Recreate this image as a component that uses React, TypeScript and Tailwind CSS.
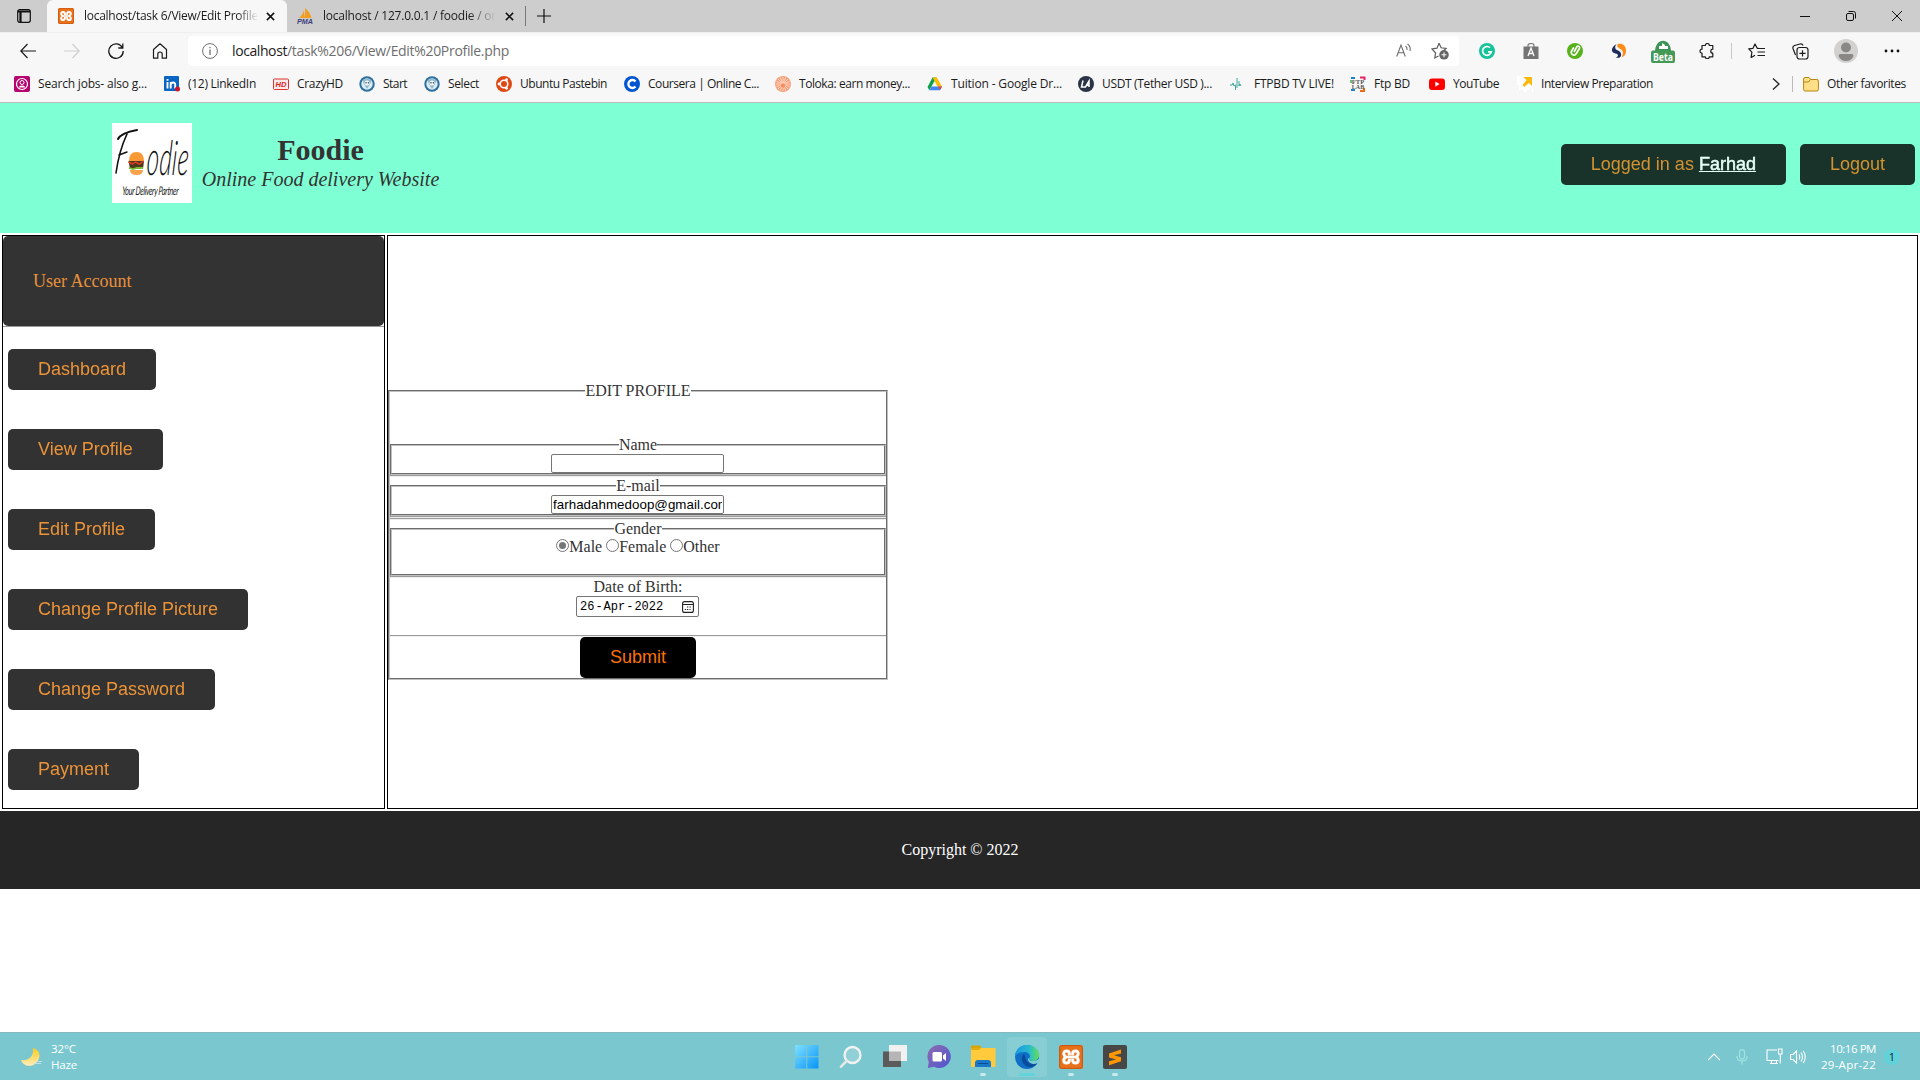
import React, { useLayoutEffect, useRef, useState } from "react";

type FitProps = { text: string; width: number; className?: string };

/* Single-line label whose tracking is adjusted to fill a given width. */
function Fit({ text, width, className = "" }: FitProps) {
  const ref = useRef<HTMLSpanElement>(null);
  const [spacing, setSpacing] = useState(0);
  useLayoutEffect(() => {
    if (ref.current) {
      const natural = ref.current.getBoundingClientRect().width;
      setSpacing((width - natural) / text.length);
    }
  }, []);
  return (
    <span className={"block shrink-0 overflow-visible whitespace-pre " + className} style={{ width }}>
      <span ref={ref} style={{ letterSpacing: spacing }}>{text}</span>
    </span>
  );
}

const UI = "font-['Open_Sans','Noto_Sans',sans-serif]";

function XamppMark() {
  return (
    <>
      <rect width="24" height="24" rx="2.500" fill="#e8711c" />
      <rect x=".7" y=".7" width="22.600" height="22.600" rx="2" fill="none" stroke="#c9560c" />
      <g fill="none" stroke="#fff" strokeWidth="3" strokeLinejoin="round">
        <path d="M10.300 10.500V8.500Q10.300 6 7.500 6T4.800 8.800Q4.800 10.500 6.800 12Q4.800 13.500 4.800 15.200Q4.800 18 7.500 18T10.300 15.500V13.500" />
        <path d="M13.700 10.500V8.500Q13.700 6 16.500 6T19.200 8.800Q19.200 10.500 17.200 12Q19.200 13.500 19.200 15.200Q19.200 18 16.500 18T13.700 15.500V13.500" />
        <path d="M7 12h10" strokeWidth="2.400" />
      </g>
    </>
  );
}

function Close() {
  return (
    <svg viewBox="0 0 10 10" className="h-[9px] w-[9px] shrink-0">
      <path d="M1 1l8 8M9 1l-8 8" stroke="#111" strokeWidth="1.700" />
    </svg>
  );
}

function TabBar() {
  return (
    <div className="flex h-8 items-stretch bg-[#cdcdcd] text-xs text-[#1b1b1b]">
      <div className="flex w-[47px] items-center pl-[17px]">
        <svg viewBox="0 0 14 14" className="h-[14px] w-[14px]">
          <rect x=".7" y=".7" width="12.600" height="12.600" rx="2" fill="none" stroke="#111" strokeWidth="1.200" />
          <path d="M1 2.500h12M3.500 3v10" stroke="#111" strokeWidth="2.200" />
        </svg>
      </div>
      <div className="flex w-[240px] items-center rounded-t-md bg-[#f7f7f7] pl-[11px]">
        <svg viewBox="0 0 24 24" className="h-4 w-4 shrink-0"><XamppMark /></svg>
        <div className="ml-[10px] w-[174px] overflow-hidden [mask-image:linear-gradient(to_right,black_88%,transparent)]">
          <Fit text="localhost/task 6/View/Edit Profile" width={174} />
        </div>
        <div className="ml-[8px]"><Close /></div>
      </div>
      <div className="flex w-[238px] items-center pl-[10px]">
        <svg viewBox="0 0 16 16" className="h-4 w-4 shrink-0">
          <path d="M2 10Q6.500 6.500 6.500 2L8 10zM8 10V0Q13 4 14.500 10z" fill="#f29d1f" />
          <text x="0" y="15.800" fontSize="6.500" fontWeight="700" fontStyle="italic" fontFamily="Liberation Sans" fill="#3c3f7c" textLength="16" lengthAdjust="spacingAndGlyphs">PMA</text>
        </svg>
        <div className="ml-[10px] w-[173px] overflow-hidden [mask-image:linear-gradient(to_right,black_84%,transparent)]">
          <Fit text="localhost / 127.0.0.1 / foodie / or" width={173} />
        </div>
        <div className="ml-[9px]"><Close /></div>
      </div>
      <div className="my-[6px] w-px bg-[#777]" />
      <svg viewBox="0 0 14 14" className="ml-[11px] mt-[9px] h-[14px] w-[14px]">
        <path d="M7 0v14M0 7h14" stroke="#111" strokeWidth="1.200" />
      </svg>
      <div className="ml-auto flex items-center pr-[18px]">
        <svg viewBox="0 0 10 10" className="h-[10px] w-[10px]"><path d="M0 5.500h10" stroke="#111" /></svg>
        <svg viewBox="0 0 10 10" className="ml-[36px] h-[10px] w-[10px]">
          <rect x=".5" y="2.500" width="7" height="7" rx="1.500" fill="none" stroke="#111" />
          <path d="M2.500 .5H7.500a2 2 0 0 1 2 2v5" fill="none" stroke="#111" />
        </svg>
        <svg viewBox="0 0 10 10" className="ml-[36px] h-[10px] w-[10px]"><path d="M0 0l10 10M10 0L0 10" stroke="#111" /></svg>
      </div>
    </div>
  );
}

function ToolBar() {
  return (
    <div className="flex h-[37px] items-center border-t border-[#efefef] bg-[#f7f7f7]">
      <svg viewBox="0 0 16 16" className="ml-5 h-4 w-4 shrink-0" fill="none" stroke="#1b1b1b" strokeWidth="1.200"><path d="M16 8H.8M7.500 1L.8 8l6.700 7" /></svg>
      <svg viewBox="0 0 16 16" className="ml-7 h-4 w-4 shrink-0" fill="none" stroke="#cfcfcf" strokeWidth="1.200"><path d="M0 8h15.200M8.500 1l6.700 7-6.700 7" /></svg>
      <svg viewBox="0 0 16 16" className="ml-7 h-4 w-4 shrink-0" fill="none" stroke="#1b1b1b" strokeWidth="1.300"><path d="M14.500 5A7.200 7.200 0 1 0 15.200 8M14.800 .5V5h-4.500" /></svg>
      <svg viewBox="0 0 16 16" className="ml-7 h-4 w-4 shrink-0" fill="none" stroke="#1b1b1b" strokeWidth="1.200" strokeLinejoin="round"><path d="M1.500 6.500L8 .8l6.500 5.700v8.700h-4.300v-4a2.200 2.200 0 0 0-4.400 0v4H1.500z" /></svg>
      <div className="ml-5 flex h-[30px] w-[1271px] items-center rounded bg-white pl-[14px]">
        <svg viewBox="0 0 16 16" className="h-4 w-4" fill="none" stroke="#6e6e6e"><circle cx="8" cy="8" r="7.400" /><path d="M8 6.500v5.500M8 4v1.300" strokeWidth="1.300" /></svg>
        <div className="ml-[14px] flex text-sm leading-5">
          <Fit text="localhost" width={55} className="text-[#1b1b1b]" />
          <Fit text="/task%206/View/Edit%20Profile.php" width={222} className="text-[#6e6e6e]" />
        </div>
        <svg viewBox="0 0 16 16" className="ml-auto h-4 w-4" fill="none" stroke="#6e6e6e" strokeWidth="1.100"><path d="M.7 13.500L5 2l4.300 11.500M2.200 9.700h5.600M9.500 3q2 1.500 1.500 4M11.500 1q3.500 2.500 2.500 7" /></svg>
        <svg viewBox="0 0 18 18" className="ml-[19px] mr-[10px] h-[18px] w-[18px]">
          <path d="M8 1.300l2.100 4.500 5 .7-3.600 3.300M7.500 14l-3.700 2 .8-5L1 7l5-.8L8 1.300" fill="none" stroke="#5e5e5e" strokeWidth="1.200" />
          <circle cx="13" cy="12.800" r="4.800" fill="#666" /><path d="M13 10.300v5M10.500 12.800h5" stroke="#fff" />
        </svg>
      </div>
      <svg viewBox="0 0 16 16" className="ml-[20px] h-4 w-4 shrink-0"><circle cx="8" cy="8" r="8" fill="#15c39a" /><path d="M11 4.700A4.400 4.400 0 1 0 12.300 8.800H9" fill="none" stroke="#fff" strokeWidth="1.700" /></svg>
      <svg viewBox="0 0 16 16" className="ml-7 h-4 w-4 shrink-0"><path d="M5 4V2.500a3 2 0 0 1 6 0V4" fill="none" stroke="#777" strokeWidth="1.200" /><path d="M.5 3.500h15V16H.5z" fill="#747474" /><path d="M5 13l3-8 3 8M6 10.500h4" fill="none" stroke="#fff" strokeWidth="1.300" /></svg>
      <svg viewBox="0 0 16 16" className="ml-7 h-4 w-4 shrink-0"><circle cx="8" cy="8" r="8" fill="#55b21a" /><path d="M6.500 5L4.700 7.800a2.700 2.700 0 0 0 4.500 3l3.200-5.300a1.500 1.500 0 0 0-2.600-1.600L7.300 8.500" fill="none" stroke="#fff" strokeWidth="1.700" strokeLinecap="round" /></svg>
      <svg viewBox="0 0 16 16" className="ml-7 h-4 w-4 shrink-0"><path d="M5.500 1C-1 5 0 10 4.500 10.500 8.500 11 7 14 4.500 14.500 11 16.500 12 9.500 7 7.500 3.500 6.500 3.500 3.500 5.500 1z" fill="#1c2c5b" /><path d="M6.500 1.200c5-1.500 9 2 8.500 7s-3 5.500-4.500 6c2.500-4 1.500-7-1.500-8.500S6 3.200 6.500 1.200z" fill="#ff8b1a" /></svg>
      <svg viewBox="0 0 24 24" className="ml-6 h-6 w-6 shrink-0">
        <path d="M4 13C4-2 20-2 20 13z" fill="#3d9456" /><path d="M8 10V7h3V4l3 2v1h3v3z" fill="#fff" />
        <rect y="11.500" width="24" height="12.500" rx="2" fill="#459957" />
        <text x="12" y="21.500" fontSize="10.500" fontWeight="700" fill="#fff" textAnchor="middle" textLength="20" lengthAdjust="spacingAndGlyphs" fontFamily="Open Sans">Beta</text>
      </svg>
      <svg viewBox="0 0 16 16" className="ml-[24px] h-4 w-4 shrink-0" fill="none" stroke="#1b1b1b" strokeWidth="1.200" strokeLinejoin="round"><path d="M3 2.500h3.300a2 2 0 0 1 4 0h3.500v3.700a2 2 0 0 0 0 4v3.600h-3.500a2 2 0 0 1-4 0H3v-3.600a2 2 0 1 1 0-4z" /></svg>
      <div className="ml-[16px] h-4 w-px shrink-0 bg-[#c8c8c8]" />
      <svg viewBox="0 0 17 16" className="ml-[16px] h-4 w-[17px] shrink-0" fill="none" stroke="#1b1b1b" strokeWidth="1.200" strokeLinejoin="round"><path d="M10.500 5.300H9.200L7 1 5 5.300l-4.300.6 3.200 3.300-.8 5.300L7 12.200M10.500 5.500H17M9.500 9H17M9.500 12.500H17" /></svg>
      <svg viewBox="0 0 17 17" className="ml-[27px] h-[17px] w-[17px] shrink-0" fill="none" stroke="#1b1b1b" strokeWidth="1.200"><path d="M3.500 12L1 5.500a2.500 2.500 0 0 1 1.500-3L8 1q2.300-.5 3 1.500" /><rect x="5" y="4.500" width="11" height="11.500" rx="2.500" /><path d="M10.500 7.200v6.200M7.400 10.300h6.200" /></svg>
      <svg viewBox="0 0 24 24" className="ml-[25px] h-6 w-6 shrink-0"><circle cx="12" cy="12" r="12" fill="#d3d1cf" /><circle cx="12" cy="8.500" r="5" fill="#8a8886" /><path d="M4.500 17q0-2 2-2h11q2 0 2 2-2 5-7.500 5t-7.500-5z" fill="#8a8886" /></svg>
      <svg viewBox="0 0 16 16" className="ml-[26px] h-4 w-4 shrink-0" fill="#111"><circle cx="2" cy="8" r="1.400" /><circle cx="8" cy="8" r="1.400" /><circle cx="14" cy="8" r="1.400" /></svg>
    </div>
  );
}

function Swirl() {
  return (
    <>
      <circle cx="8" cy="8" r="7.700" fill="#2d6f9f" />
      <circle cx="8" cy="8" r="5.700" fill="#dcecf3" />
      <path d="M3.500 4.500Q8 1 12.500 4.500L11 8l-3 5-3-5z" fill="#8fb8cd" />
      <circle cx="8" cy="7" r="2.500" fill="#f4f8fa" /><path d="M7 6v1.500M9.300 6v1.500" stroke="#234" />
    </>
  );
}

const bookmarks: { text: string; width: number; gap: string; icon: React.ReactNode }[] = [
  { text: "Search jobs- also g...", width: 109, gap: "mr-[17px]", icon: <><rect width="16" height="16" rx="2" fill="#b5046f" /><circle cx="8" cy="8" r="5.500" fill="none" stroke="#fff" strokeWidth="1.200" /><circle cx="8" cy="6.500" r="2" fill="none" stroke="#fff" /><path d="M5 11.500q0-2 3-2t3 2z" fill="#fff" /></> },
  { text: "(12) LinkedIn", width: 68, gap: "mr-[17px]", icon: <><rect width="15" height="15" rx="1" fill="#0a66c2" /><path d="M3.500 6v6.500M3.500 3v1.800M6.700 6v6.500M6.700 9q0-2.500 2.300-2.500T11.200 9v3.500" fill="none" stroke="#fff" strokeWidth="1.900" /><circle cx="13.500" cy="13" r="2.500" fill="#d11124" /></> },
  { text: "CrazyHD", width: 46, gap: "mr-[16px]", icon: <><rect x=".5" y="3" width="15" height="10.500" rx="1" fill="#fbe9e9" stroke="#d33" /><text x="8" y="11" fontSize="7.500" fontWeight="700" fontStyle="italic" fill="#d22" textAnchor="middle" fontFamily="Liberation Sans">HD</text></> },
  { text: "Start", width: 24, gap: "mr-[17px]", icon: <Swirl /> },
  { text: "Select", width: 31, gap: "mr-[17px]", icon: <Swirl /> },
  { text: "Ubuntu Pastebin", width: 87, gap: "mr-[17px]", icon: <><circle cx="8" cy="8" r="8" fill="#dd4814" /><circle cx="8" cy="8" r="3.800" fill="none" stroke="#fff" strokeWidth="1.600" /><circle cx="3" cy="8" r="1.400" fill="#fff" /><circle cx="10.500" cy="3.700" r="1.400" fill="#fff" /><circle cx="10.500" cy="12.300" r="1.400" fill="#fff" /></> },
  { text: "Coursera | Online C...", width: 111, gap: "mr-[16px]", icon: <><circle cx="8" cy="8" r="8" fill="#0056d2" /><path d="M11.500 5.500A4 4 0 1 0 11.500 10.500" fill="none" stroke="#fff" strokeWidth="2.300" /></> },
  { text: "Toloka: earn money...", width: 111, gap: "mr-[17px]", icon: <><circle cx="8" cy="8" r="8" fill="#f8a27c" /><path d="M8 1v14M1 8h14M3 3l10 10M13 3L3 13M5.300 1.500l5.400 13M10.700 1.500l-5.400 13M1.500 5.300l13 5.400M1.500 10.700l13-5.400" stroke="#fde3d6" strokeWidth=".7" /><circle cx="8" cy="9.500" r="2.200" fill="#fb8a5c" /></> },
  { text: "Tuition - Google Dr...", width: 111, gap: "mr-[16px]", icon: <><path d="M5.500 1.500h4L4.200 11 2.300 14.200.5 11z" fill="#0fa04c" /><path d="M5.500 1.500h4.300L15 10.500h-4.400z" fill="#fbbc04" /><path d="M4.500 10.500H15l-2 3.700H2.500z" fill="#4285f4" /><path d="M11 10.500h4L13 14z" fill="#ea4335" /></> },
  { text: "USDT (Tether USD )...", width: 110, gap: "mr-[18px]", icon: <><circle cx="8" cy="8" r="8" fill="#2b3348" /><path d="M5 4.500L3.500 11h4L11 5v6M8 9.300h3" fill="none" stroke="#fff" strokeWidth="1.500" /></> },
  { text: "FTPBD TV LIVE!", width: 80, gap: "mr-[16px]", icon: <path d="M0 9h2l1-2 1 3 1.500-1V14M7 2v10M9 5v5l1-2 1 2" fill="none" stroke="#2a9d95" strokeWidth=".9" /> },
  { text: "Ftp BD", width: 36, gap: "mr-[19px]", icon: <><path d="M1 2h4M1 14h4" stroke="#1783d1" fill="none" strokeWidth="2" /><path d="M10 1.500h4.500V4" stroke="#ea2264" fill="none" strokeWidth="2" /><path d="M10 15h4v-3" stroke="#ee6a14" fill="none" strokeWidth="2" /><path d="M1 4v3" stroke="#3bb24a" strokeWidth="1.500" /><text x="8" y="8" fontSize="6.500" fontWeight="700" textAnchor="middle" fill="#555" fontFamily="Liberation Serif">FTP</text><text x="8" y="13" fontSize="6" fontWeight="700" textAnchor="middle" fill="#555" fontFamily="Liberation Serif">LAB</text></> },
  { text: "YouTube", width: 46, gap: "mr-[18px]", icon: <><rect y="2.500" width="16" height="11.500" rx="3" fill="#f00" /><path d="M6.300 5.500v5.200l4.300-2.600z" fill="#fff" /></> },
  { text: "Interview Preparation", width: 112, gap: "mr-0", icon: <><rect width="16" height="16" fill="#fff" /><path d="M6 1h9v9l-3-3-5 4-1.500-2L9.500 4z" fill="#fbb80f" /><path d="M1 9v6h5M10 15h4v-3" fill="none" stroke="#eee" /></> },
];

function Bookmarks() {
  return (
    <div className="flex h-[34px] items-center border-b border-[#bdbdbd] bg-[#f7f7f7] pb-[3px] pl-[14px] text-xs text-[#1b1b1b]">
      {bookmarks.map((b) => (
        <div key={b.text} className={"flex shrink-0 items-center gap-2 " + b.gap}>
          <svg viewBox="0 0 16 16" className="h-4 w-4 shrink-0">{b.icon}</svg>
          <Fit text={b.text} width={b.width} />
        </div>
      ))}
      <div className="ml-auto flex items-center pr-[14px]">
        <svg viewBox="0 0 8 12" className="h-3 w-2" fill="none" stroke="#222" strokeWidth="1.300"><path d="M1 .5L7 6l-6 5.500" /></svg>
        <div className="ml-[12px] h-4 w-px bg-[#bbb]" />
        <svg viewBox="0 0 16 16" className="ml-[10px] h-4 w-4"><path d="M.6 3q0-1.500 1.500-1.500h4l1.500 2h6.300q1.500 0 1.500 1.500v8.500q0 1.500-1.500 1.500H2.100q-1.500 0-1.500-1.500z" fill="#ffdf88" stroke="#b8860b" /><path d="M.6 6h4.900l2-2.500" fill="none" stroke="#b8860b" /></svg>
        <Fit text="Other favorites" width={79} className="ml-2" />
      </div>
    </div>
  );
}

const BTN = "h-[41px] rounded-[5px] bg-black px-[30px] font-['Liberation_Sans',Arial,sans-serif] text-lg leading-[39px] text-[#e87806] opacity-80 whitespace-nowrap";

function SiteHeader() {
  return (
    <header className="flex h-[130px] bg-[#7fffd4] pl-28 pr-[5px]">
      <svg viewBox="0 0 80 80" className="mt-5 h-20 w-20">
        <rect width="80" height="80" fill="#fff" />
        <g fill="none" stroke="#111" strokeLinecap="round">
          <path d="M6 16Q9 10 25 7" strokeWidth="2" />
          <path d="M15 11Q7 28 4 50" strokeWidth="1.600" />
          <path d="M7 32L15 29" strokeWidth="1.400" />
        </g>
        <text transform="translate(34 52) scale(.5 1) skewX(-7)" fontSize="48" fontStyle="italic" fontFamily="Lato" fontWeight="300" fill="#111" textLength="84">odie</text>
        <path d="M17 38q0-9 7.500-9t7.500 9z" fill="#f99a35" />
        <path d="M16.500 38h15.500l-1 8H18z" fill="#4d3a1c" />
        <path d="M16.500 39l4 2 3-2 4 2 4-3" stroke="#e53a25" fill="none" strokeWidth="1.500" />
        <path d="M17 45l4 1 4-1 6 0" stroke="#78bd35" fill="none" strokeWidth="1.800" />
        <path d="M18 47h13q0 5-6.500 5T18 47z" fill="#f8a24b" />
        <text transform="translate(10 72) scale(.6 1) skewX(-6)" fontSize="12" fontStyle="italic" fontFamily="Lato" fill="#222" textLength="94">Your Delivery Partner</text>
      </svg>
      <div className="ml-[10px] mt-[30px] flex w-[237px] flex-col items-center font-['Liberation_Serif','Times_New_Roman',serif] text-[#333]">
        <h1 className="text-[30px] font-bold leading-[34px]">Foodie</h1>
        <p className="mt-px whitespace-nowrap text-xl leading-[23px] italic">Online Food delivery Website</p>
      </div>
      <div className="ml-auto mt-[41px] flex gap-[14px]">
        <button className={BTN}>Logged in as <span className="text-white underline [-webkit-text-stroke:0.5px_white]">Farhad</span></button>
        <button className={BTN}>Logout</button>
      </div>
    </header>
  );
}

const links = ["Dashboard", "View Profile", "Edit Profile", "Change Profile Picture", "Change Password", "Payment"];

function Sidebar() {
  return (
    <aside className="w-[383px] border border-black">
      <div className="flex h-[90px] items-center rounded-[5px] bg-[#333] pl-[30px] text-lg text-[#e8913c]">User Account</div>
      <div className="h-px bg-[#9a9a9a]" />
      <nav className="mt-[22px] flex flex-col items-start gap-[39px] pl-[5px]">
        {links.map((l) => <button key={l} className={BTN}>{l}</button>)}
      </nav>
    </aside>
  );
}

const FS = "border-2 border-[#c0c0c0] [border-style:groove] p-0 m-0 min-w-0";

function Rule() {
  return <div className="h-0.5 border-b border-t border-b-[#eeeeee] border-t-[#9a9a9a]" />;
}

function Radio({ label, checked }: { label: string; checked?: boolean }) {
  return (
    <label className="flex">
      <span className="mt-px flex h-[13px] w-[13px] items-center justify-center rounded-full border border-[#767676] bg-white">
        {checked && <span className="h-[7px] w-[7px] rounded-full bg-[#767676]" />}
      </span>
      {label}
    </label>
  );
}

function EditForm() {
  return (
    <fieldset className={FS + " w-[500px] text-center text-[16px] leading-[normal] text-[#333]"}>
      <legend className="mx-auto h-[18px] p-0">EDIT PROFILE</legend>
      <div className="h-9" />
      <fieldset className={FS}>
        <legend className="mx-auto h-[18px] p-0">Name</legend>
        <div className="ml-[159px] h-[19px] w-[173px] rounded-xs border border-[#767676] bg-white" />
      </fieldset>
      <Rule />
      <fieldset className={FS}>
        <legend className="mx-auto h-[18px] p-0">E-mail</legend>
        <div className="ml-[159px] h-[19px] w-[173px] rounded-xs border border-[#767676] bg-white px-px font-['Liberation_Sans',Arial,sans-serif] text-[13.333px] leading-[17px] text-black">
          <div className="w-[169px] overflow-hidden whitespace-nowrap text-left">
            <Fit text="farhadahmedoop@gmail.com" width={176} />
          </div>
        </div>
      </fieldset>
      <Rule />
      <Rule />
      <fieldset className={FS}>
        <legend className="mx-auto h-[18px] p-0">Gender</legend>
        <div className="flex h-9 justify-center gap-1">
          <Radio label="Male" checked />
          <Radio label="Female" />
          <Radio label="Other" />
        </div>
      </fieldset>
      <Rule />
      <div className="h-[18px]">Date of Birth:</div>
      <div className="mb-[18px] ml-[186px] flex h-[21px] w-[123px] items-center rounded-xs border border-[#767676] bg-white pl-[3px] font-['Liberation_Mono',monospace] text-xs text-black">
        <span>26</span><span className="ml-px">-</span><span className="ml-px">Apr</span><span className="ml-px">-</span><span className="ml-px">2022</span>
        <svg viewBox="0 0 12 12" className="ml-auto mr-[4px] h-3 w-3">
          <rect x=".6" y=".6" width="10.800" height="10.800" rx="2" fill="none" stroke="#222" strokeWidth="1.100" />
          <path d="M.6 3.500h10.800" stroke="#222" />
          <path d="M5 6h1.300M7.500 6h1.300M2.800 8.500h1.300M5 8.500h1.300M7.500 8.500h1" stroke="#222" strokeWidth="1.200" />
        </svg>
      </div>
      <Rule />
      <button className="mx-auto block h-[41px] rounded-[5px] bg-black px-[30px] font-['Liberation_Sans',Arial,sans-serif] text-lg leading-[39px] text-[#f97206]">Submit</button>
    </fieldset>
  );
}

function Cell({ children, dot, active }: { children: React.ReactNode; dot?: boolean; active?: boolean }) {
  return (
    <div className="flex w-11 justify-center">
      <div className={active ? "flex h-10 w-10 flex-col items-center rounded bg-white/10 pt-2" : "flex h-10 w-10 flex-col items-center pt-2"}>
        <svg viewBox="0 0 24 24" className="h-6 w-6 overflow-visible">{children}</svg>
        {dot && <span className="mt-1 h-[3px] w-1.5 rounded-full bg-[#c9e9ec]" />}
        {active && <span className="mt-1 h-[3px] w-4 rounded-full bg-[#61d3da]" />}
      </div>
    </div>
  );
}

function TaskIcons() {
  return (
    <div className="ml-[765px] flex">
      <Cell>
        <defs><linearGradient id="win" x1="0" y1="0" x2="1" y2="1"><stop offset="0" stopColor="#80e0ff" /><stop offset="1" stopColor="#0794f7" /></linearGradient></defs>
        <path d="M0 0h11.300v11.300H0zM12.300 0H23.500v11.300H12.300zM0 12.300h11.300v11.200H0zM12.300 12.300h11.200v11.200H12.300z" fill="url(#win)" />
      </Cell>
      <Cell>
        <circle cx="13.500" cy="10" r="8" fill="#a5d9de" fillOpacity=".5" stroke="#f2f2f2" strokeWidth="2.300" />
        <path d="M7.500 16L2 21.700" stroke="#e5e7e8" strokeWidth="2.600" strokeLinecap="round" />
      </Cell>
      <Cell>
        <rect x="0" y="6.500" width="18" height="15.500" fill="#5b5b5b" /><rect x="6" y="0" width="18" height="16" fill="#f1f1f1" /><rect x="6" y="6.500" width="12" height="9.500" fill="#b5b5b5" />
      </Cell>
      <Cell>
        <defs><linearGradient id="chat" x1="0" y1="0" x2="1" y2="1"><stop offset="0" stopColor="#8f6cae" /><stop offset="1" stopColor="#4d56d0" /></linearGradient></defs>
        <path d="M12 0a11.500 11.500 0 1 1-5 21.700L.8 23l1-6A11.500 11.500 0 0 1 12 0z" fill="url(#chat)" />
        <rect x="5.500" y="7" width="9.500" height="9.500" rx="1.500" fill="#fff" /><path d="M16 10.500l3-2.500v8l-3-2.500z" fill="#fff" />
      </Cell>
      <Cell dot>
        <path d="M0 1.500Q0 .5 1 .5h8l2 3H0z" fill="#dba400" /><rect y="3" width="24.500" height="19" rx="1" fill="#ffcb3d" /><path d="M0 3h10l-2 2H0z" fill="#e5ad0d" />
        <path d="M4 22v-4q0-3 3-3h10q3 0 3 3v4z" fill="#1978c8" /><path d="M7 18.500h10" stroke="#0d4d8c" />
      </Cell>
      <Cell active>
        <defs><linearGradient id="edge" x1="0" y1="0" x2="1" y2="0"><stop offset="0" stopColor="#1b95e0" /><stop offset=".6" stopColor="#28bccd" /><stop offset="1" stopColor="#64df55" /></linearGradient></defs>
        <circle cx="12" cy="12" r="12" fill="#0f6fc6" />
        <path d="M0 11C1 3.500 6 0 12 0c7 0 12 4.500 12 10 0 4-3 6-6 6-3.500 0-4.500-1.500-3.500-3C16 11 14 7 9.500 7 5 7 1.500 9 0 11z" fill="url(#edge)" />
        <path d="M9 9c-5 4-1 13 6 13 4 0 6-2 7.500-4-2.500 1.500-6 1.500-8.500 0-4-2.500-3-6-5-9z" fill="#0a4c9b" />
        <path d="M14.500 13c-1 1.500 0 3 3.500 3 2.500 0 5-1 6.500-2.500V17l-2 1q-4 2-7 0t-2.500-4.500z" fill="#7fcbd3" />
      </Cell>
      <Cell dot><XamppMark /></Cell>
      <Cell dot>
        <rect width="24" height="24" rx="2" fill="#474747" />
        <path d="M18 4.500L6 8.500v4l7 2-7 1.700v4l12-4v-4l-7-2 7-1.700z" fill="#ff9800" />
      </Cell>
    </div>
  );
}

function TaskBar() {
  return (
    <div className="flex h-12 items-center border-t border-[#86b9bf] bg-[#7ac7cf] text-white">
      <div className="flex h-full w-0 items-center pl-5">
        <svg viewBox="0 0 24 20" className="h-5 w-6 shrink-0">
          <defs><linearGradient id="moon" x1="0" y1="0" x2="0" y2="1"><stop offset="0" stopColor="#ffc918" /><stop offset="1" stopColor="#ffeebb" /></linearGradient></defs>
          <path d="M13 1c8 2 8 10 3 15s-13 3-15-3c8 1 13-4 12-12z" fill="url(#moon)" />
          <path d="M14 16.500h7M17 14.500h5" stroke="#bfe0ef" />
        </svg>
        <div className="ml-[7px] flex shrink-0 flex-col text-[11.500px] leading-4">
          <Fit text="32°C" width={25} /><Fit text="Haze" width={26} />
        </div>
      </div>
      <TaskIcons />
      <div className="ml-auto flex items-center pr-5">
        <svg viewBox="0 0 12 8" className="h-2 w-3" fill="none" stroke="#fff" strokeWidth="1.200"><path d="M0 7l6-6 6 6" /></svg>
        <svg viewBox="0 0 12 16" className="ml-4 h-4 w-3" fill="none" stroke="#9fe3e2" strokeWidth="1.200"><rect x="3.500" y=".6" width="5" height="9.500" rx="2.500" /><path d="M.8 7q0 5 5.200 5t5.200-5M6 12v3.500" /></svg>
        <svg viewBox="0 0 17 17" className="ml-[18px] h-[17px] w-[17px]" fill="none" stroke="#fff" strokeWidth="1.100"><path d="M11 2H1v10.500h11.500M4 15.500h8M5.500 12.500v3M10.500 12.500v3M12.500 1h3.500v5h-3.500zM14.300 6v9.500" /></svg>
        <svg viewBox="0 0 16 14" className="ml-[7px] h-[14px] w-4" fill="none" stroke="#fff" strokeWidth="1.100"><path d="M.6 4.500h2.500L6.500 1v12L3.100 9.500H.6zM9 4.500q1.500 2.500 0 5M11 2.500q3 4.500 0 9M13.200 .8q4 6 0 12.400" /></svg>
        <div className="ml-[15px] flex flex-col items-end text-[11.500px] leading-4">
          <Fit text="10:16 PM" width={46} /><Fit text="29-Apr-22" width={55} />
        </div>
        <div className="ml-2 flex h-4 w-4 items-center justify-center rounded-full bg-[#62d2da] text-[11px] leading-4 text-[#123]">1</div>
      </div>
    </div>
  );
}

export default function App() {
  return (
    <div className="flex h-[1080px] w-[1920px] flex-col overflow-hidden bg-white">
      <div className={UI}>
        <TabBar />
        <ToolBar />
        <Bookmarks />
      </div>
      <div className="flex flex-1 flex-col font-['Liberation_Serif','Times_New_Roman',serif]">
        <SiteHeader />
        <main className="mx-0.5 mt-0.5 flex h-[574px] gap-0.5">
          <Sidebar />
          <section className="flex w-[1531px] items-start border border-black pt-[146px]">
            <EditForm />
          </section>
        </main>
        <footer className="mt-0.5 flex h-[78px] items-center justify-center bg-[#262626] text-base text-white">Copyright © 2022</footer>
      </div>
      <div className={UI}>
        <TaskBar />
      </div>
    </div>
  );
}
